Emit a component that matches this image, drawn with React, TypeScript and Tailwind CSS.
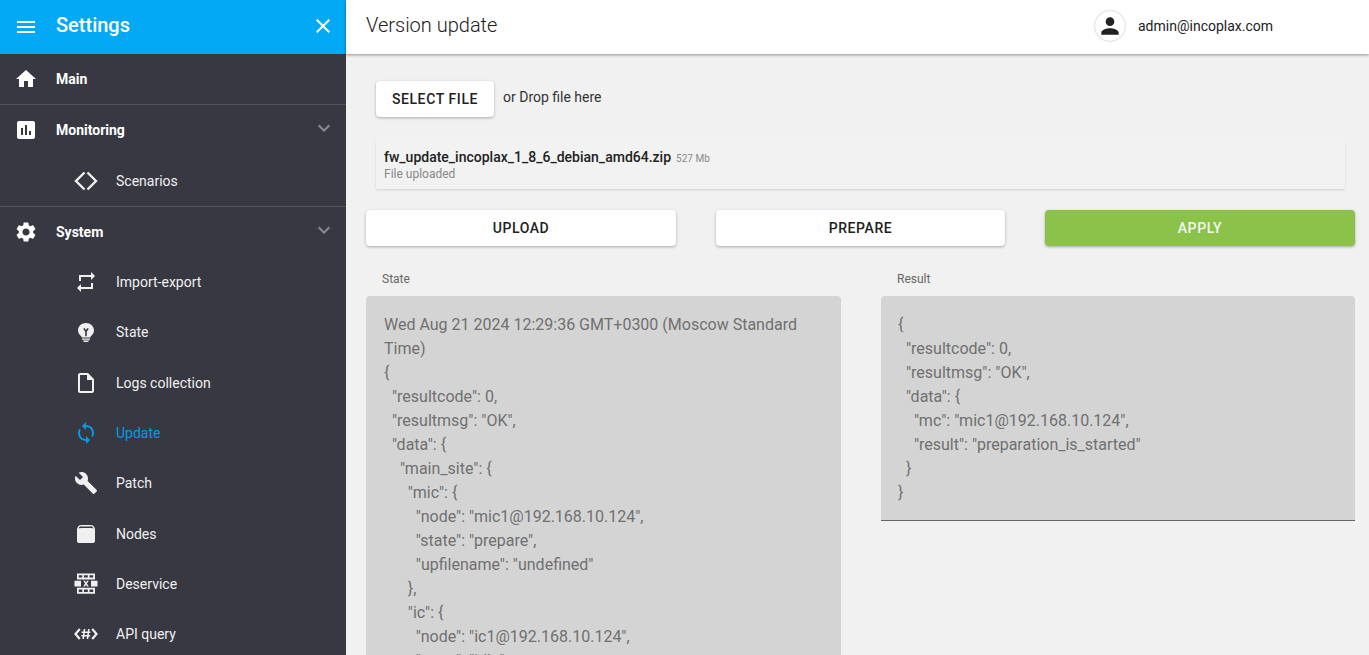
import React from 'react';
import {
  MdMenu,
  MdClose,
  MdHome,
  MdAssessment,
  MdSettings,
  MdRepeat,
  MdOutlineInsertDriveFile,
  MdSync,
  MdBuild,
  MdPerson,
  MdKeyboardArrowDown,
} from 'react-icons/md';

const CodeIcon = () => (
  <svg viewBox="0 0 24 24" className="w-6 h-6" fill="none" stroke="currentColor" strokeWidth="2.400">
    <path d="M10.500 3.500 2 12l8.500 8.500M13.500 3.500 22 12l-8.500 8.500" />
  </svg>
);

const BulbIcon = () => (
  <svg viewBox="0 0 24 24" className="w-6 h-6" fill="currentColor">
    <path
      fillRule="evenodd"
      d="M12 3c4.400 0 8 3.200 8 7.300 0 2.700-1.500 4.700-3.500 6.100V17.500h-9v-1.100C5.500 15 4 13 4 10.300 4 6.200 7.600 3 12 3zM9.200 8.800l2 3v4.400h1.600v-4.400l2-3-1.300-.8L12 10l-1.500-2z"
    />
    <path d="M8 18.500h8v1.300H8zM8.800 20.600h6.400c-.3.800-1 1.400-1.800 1.400h-2.800c-.8 0-1.500-.6-1.800-1.400z" />
  </svg>
);

const NodesIcon = () => (
  <svg viewBox="0 0 24 24" className="w-6 h-6" fill="currentColor">
    <path
      fillRule="evenodd"
      d="M7.500 3h9C19.500 3 21 5 21 8v11c0 1.200-.8 2-2 2H5c-1.200 0-2-.8-2-2V8c0-3 1.500-5 4.500-5zM7 4.300C5.900 4.700 5 5.400 4.600 6.300c2-.4 12.800-.4 14.800 0-.4-.9-1.300-1.600-2.400-2-.8.4-9.200.4-10 0z"
    />
  </svg>
);

const DeserviceIcon = () => (
  <svg viewBox="0 0 24 24" className="w-6 h-6" fill="currentColor">
    <path
      fillRule="evenodd"
      d="M3 1.500h18v6H3zM4.800 3.200v2.300h3.500V3.200zM10 3.200v2.300h3.800V3.200zM15.500 3.200v2.300h3.700V3.200z"
    />
    <path d="M0.500 8.800h6.500v5.600H0.500zM17 8.800h6.500v5.600H17z" />
    <path d="M9.200 8.800h1.800l1 1.700 1-1.700h1.800l-1.900 2.800 1.900 2.800h-1.800l-1-1.700-1 1.700H9.200l1.900-2.800z" />
    <path
      fillRule="evenodd"
      d="M3 15.700h18v6H3zM4.800 17.400v2.600h3.500v-2.600zM10 17.400v2.600h3.800v-2.600zM15.500 17.400v2.600h3.700v-2.600z"
    />
  </svg>
);

const ApiIcon = () => (
  <svg viewBox="0 0 24 24" className="w-6 h-6" fill="none" stroke="currentColor" strokeWidth="2.200">
    <path d="M5.800 7 1.500 12l4.300 5M18.200 7l4.300 5-4.300 5" />
    <path strokeWidth="1.600" d="M10.500 7 9.200 17M14.800 7l-1.300 10M7.600 10.300h8.800M7.400 13.700h8.800" />
  </svg>
);

const subItems = [
  { name: 'Import-export', icon: <MdRepeat size={24} /> },
  { name: 'State', icon: <BulbIcon /> },
  { name: 'Logs collection', icon: <MdOutlineInsertDriveFile size={24} /> },
  { name: 'Update', icon: <MdSync size={24} />, active: true },
  { name: 'Patch', icon: <MdBuild size={24} /> },
  { name: 'Nodes', icon: <NodesIcon /> },
  { name: 'Deservice', icon: <DeserviceIcon /> },
  { name: 'API query', icon: <ApiIcon /> },
];

const stateText = `Wed Aug 21 2024 12:29:36 GMT+0300 (Moscow Standard Time)
{
  "resultcode": 0,
  "resultmsg": "OK",
  "data": {
    "main_site": {
      "mic": {
        "node": "mic1@192.168.10.124",
        "state": "prepare",
        "upfilename": "undefined"
      },
      "ic": {
        "node": "ic1@192.168.10.124",
        "state": "idle",`;

const resultText = `{
  "resultcode": 0,
  "resultmsg": "OK",
  "data": {
    "mc": "mic1@192.168.10.124",
    "result": "preparation_is_started"
  }
}`;

const SubRow = ({ name, icon, active }: { name: string; icon: React.ReactNode; active?: boolean }) => (
  <div className={`flex items-center h-[50.3px] ${active ? 'text-[#039be5]' : 'text-[#f0f0f0]'}`}>
    <div className="w-[116px] pl-[74px] flex items-center">{icon}</div>
    <span className="text-sm">{name}</span>
  </div>
);

const GroupRow = ({ name, icon, arrow }: { name: string; icon: React.ReactNode; arrow?: boolean }) => (
  <div className="flex items-center shrink-0 h-[50px] text-white">
    <div className="w-[56px] pl-[14px] flex items-center">{icon}</div>
    <span className="text-sm font-bold flex-1">{name}</span>
    {arrow && <MdKeyboardArrowDown size={24} className="text-[#8a8a8f] mr-[10px] -mt-1" />}
  </div>
);

export default function App() {
  return (
    <div className="flex h-[655px] overflow-hidden bg-[#f1f1f1] text-[#212121] font-['Roboto',sans-serif]">
      <aside className="w-[346px] shrink-0 bg-[#383842] flex flex-col overflow-hidden">
        <div className="h-[54px] shrink-0 bg-[#03a9f4] text-white flex items-center">
          <div className="w-[56px] pl-[14px] flex"><MdMenu size={24} /></div>
          <span className="text-xl font-medium flex-1 -mt-[4px]">Settings</span>
          <MdClose size={24} className="mr-[11px] -mt-[2px]" />
        </div>
        <div className="shrink-0 border-b border-[#53535c]">
          <GroupRow name="Main" icon={<MdHome size={24} />} />
        </div>
        <div className="shrink-0 border-b border-[#53535c]">
          <GroupRow name="Monitoring" icon={<MdAssessment size={24} />} arrow />
          <div className="flex items-center h-[51px] text-[#f0f0f0]">
            <div className="w-[116px] pl-[74px] flex items-center"><CodeIcon /></div>
            <span className="text-sm">Scenarios</span>
          </div>
        </div>
        <GroupRow name="System" icon={<MdSettings size={24} />} arrow />
        <div className="shrink-0">
          {subItems.map(s => (
            <SubRow key={s.name} {...s} />
          ))}
        </div>
      </aside>

      <main className="flex-1 min-w-0 flex flex-col">
        <header className="h-[54px] shrink-0 bg-white shadow-[0_1px_3px_rgba(0,0,0,0.4)] flex items-center relative z-10">
          <h1 className="text-xl font-light ml-[20px] flex-1 -mt-[4px] text-[#212121]">Version update</h1>
          <div className="w-[30px] h-[30px] rounded-full bg-white shadow-[0_0_2px_rgba(0,0,0,0.35)] flex items-center justify-center mr-[13px] -mt-[2px]">
            <MdPerson size={26} className="text-[#212121]" />
          </div>
          <span className="text-sm w-[231px] -mt-[3px]">admin@incoplax.com</span>
        </header>

        <div className="flex-1 min-h-0 overflow-hidden pl-[20px] pr-[14px]">
          <div className="flex items-start pl-[10px] pt-[27px]">
            <button className="w-[118px] h-[36px] bg-white rounded shadow-[0_1px_3px_rgba(0,0,0,0.3)] text-sm font-medium tracking-[0.6px]">
              SELECT FILE
            </button>
            <span className="text-sm ml-[9px] mt-[6px] text-[#333]">or Drop file here</span>
          </div>

          <div className="ml-[10px] mr-[10px] mt-[24px] h-[48px] bg-[#f2f2f2] shadow-[0_1px_2px_rgba(0,0,0,0.12)] px-[8px] pt-[6px]">
            <div className="flex items-baseline leading-[17px]">
              <span className="text-sm font-medium">fw_update_incoplax_1_8_6_debian_amd64.zip</span>
              <span className="text-[10px] text-[#888] ml-[5px]">527 Mb</span>
            </div>
            <div className="text-xs text-[#888] leading-[15px]">File uploaded</div>
          </div>

          <div className="flex mt-[21px] gap-[40px]">
            <button className="w-[310px] h-[36px] bg-white rounded shadow-[0_1px_3px_rgba(0,0,0,0.3)] text-sm font-medium tracking-[0.6px]">UPLOAD</button>
            <button className="w-[289px] h-[36px] bg-white rounded shadow-[0_1px_3px_rgba(0,0,0,0.3)] text-sm font-medium tracking-[0.6px]">PREPARE</button>
            <button className="w-[310px] h-[36px] bg-[#8bc34a] text-[#f5f5f5] rounded shadow-[0_1px_3px_rgba(0,0,0,0.3)] text-sm font-medium tracking-[0.6px]">APPLY</button>
          </div>

          <div className="flex items-start mt-[25px] gap-[40px]">
            <div className="w-[475px] shrink-0">
              <div className="text-xs text-[#666] pl-[16px] h-[25px] leading-[16px]">State</div>
              <div className="bg-[#d4d4d4] rounded-t px-[18px] pt-[17px] h-[400px] text-base leading-[24px] text-[#707070] whitespace-pre-wrap">{stateText}</div>
            </div>
            <div className="w-[474px] shrink-0">
              <div className="text-xs text-[#666] pl-[16px] h-[25px] leading-[16px]">Result</div>
              <div className="bg-[#d4d4d4] rounded-t border-b border-[#666] pl-[17px] pr-[18px] pt-[17px] h-[225px] text-base leading-[24px] text-[#707070] whitespace-pre-wrap">{resultText}</div>
            </div>
          </div>
        </div>
      </main>
    </div>
  );
}
